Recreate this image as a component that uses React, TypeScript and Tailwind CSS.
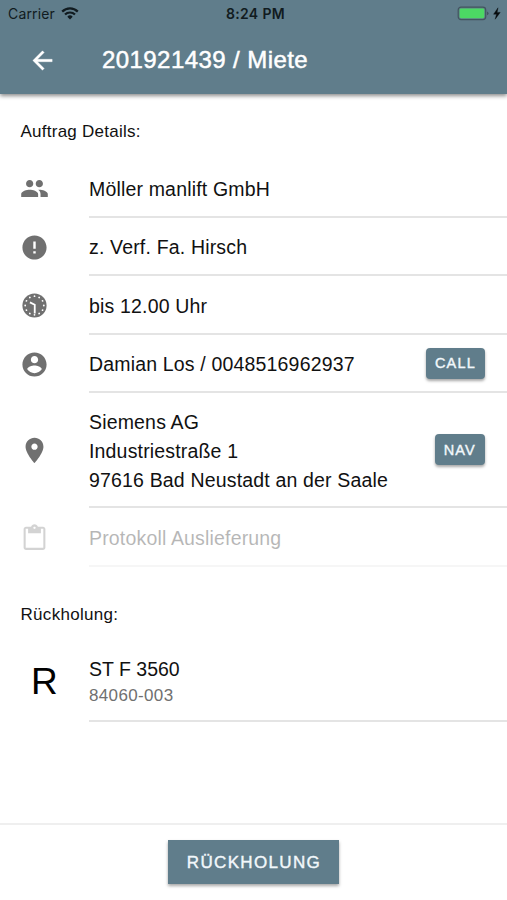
import React from 'react';

const ICON_PATHS = {
  people:
    'M16 11c1.66 0 2.99-1.34 2.99-3S17.66 5 16 5s-3 1.34-3 3 1.34 3 3 3zm-8 0c1.66 0 2.99-1.34 2.99-3S9.66 5 8 5 5 6.34 5 8s1.34 3 3 3zm0 2c-2.33 0-7 1.17-7 3.5V19h14v-2.5c0-2.33-4.67-3.5-7-3.5zm8 0c-.29 0-.62.02-.97.05 1.16.84 1.97 1.97 1.97 3.45V19h6v-2.5c0-2.33-4.67-3.5-7-3.5z',
  alert:
    'M12 2C6.48 2 2 6.48 2 12s4.48 10 10 10 10-4.48 10-10S17.52 2 12 2zm1 15h-2v-2h2v2zm0-4h-2V7h2v6z',
  contact:
    'M12 2C6.48 2 2 6.48 2 12s4.48 10 10 10 10-4.48 10-10S17.52 2 12 2zm0 3c1.66 0 3 1.34 3 3s-1.34 3-3 3-3-1.34-3-3 1.34-3 3-3zm0 14.2c-2.5 0-4.71-1.28-6-3.22.03-1.99 4-3.08 6-3.08 1.99 0 5.97 1.09 6 3.08-1.29 1.94-3.5 3.22-6 3.22z',
  pin: 'M12 1.4C8.13 1.4 4.6 4.5 4.6 8.8c0 5.4 7.4 13.6 7.4 13.6s7.4-8.2 7.4-13.6c0-4.3-3.5-7.4-7.4-7.4zm0 10c-1.44 0-2.6-1.16-2.6-2.6s1.16-2.6 2.6-2.6 2.6 1.16 2.6 2.6-1.16 2.6-2.6 2.6z',
  clipboard:
    'M19 3h-4.18C14.4 1.84 13.3 1 12 1s-2.4.84-2.82 2H5c-1.1 0-2 .9-2 2v15.3c0 1.1.9 2 2 2h14c1.1 0 2-.9 2-2V5c0-1.1-.9-2-2-2zm-7 0c.55 0 1 .45 1 1s-.45 1-1 1-1-.45-1-1 .45-1 1-1zm7.3 17.5H4.7V4.8h2V8.4h10.6V4.8h2v15.7z',
};

const Icon: React.FC<{ name: keyof typeof ICON_PATHS }> = ({ name }) => (
  <svg viewBox="0 0 24 24" className="size-[29px]" fill="currentColor" aria-hidden="true">
    <path d={ICON_PATHS[name]} />
  </svg>
);

const ClockIcon: React.FC = () => (
  <svg viewBox="0 0 24 24" className="size-[29px]" aria-hidden="true">
    <circle cx="12" cy="12" r="10" fill="currentColor" />
    {Array.from({ length: 12 }, (_, i) => (
      <circle key={i} cx="12" cy="4.3" r="0.75" fill="white" transform={`rotate(${i * 30} 12 12)`} />
    ))}
    <path d="M8.2 9.4 12.2 11.4V18.6" fill="none" stroke="white" strokeWidth="1.5" />
  </svg>
);

interface RowProps {
  icon: React.ReactNode;
  children: React.ReactNode;
  action?: string;
  height?: string;
  disabled?: boolean;
}

const Row: React.FC<RowProps> = ({ icon, children, action, height = 'h-[58.5px]', disabled }) => (
  <li className={`flex pl-5 ${height} ${disabled ? 'opacity-30' : ''}`}>
    <div className="flex w-[69px] shrink-0 items-center text-[#707070]">{icon}</div>
    <div className="flex flex-1 items-center justify-between border-b-2 border-[#e4e4e4] pr-[22px]">
      <div className="pt-[3px] text-[19.5px] leading-[29.2px] tracking-[0.17px] whitespace-nowrap">{children}</div>
      {action && (
        <button
          type="button"
          className="h-[31px] rounded-[4px] bg-[#607d8b] pt-px pr-[9px] pl-[9px] text-[14.5px] leading-none font-normal tracking-[1.2px] text-[#f2f8fb] shadow-[0_2px_3px_rgba(0,0,0,0.35)] [-webkit-text-stroke:0.4px_#f2f8fb]"
        >
          {action}
        </button>
      )}
    </div>
  </li>
);

const StatusBar: React.FC = () => (
  <div className="grid h-[27px] grid-cols-3 items-center pr-[6px] pl-[8px] text-[#111b20]">
    <div className="flex items-center gap-[6px]">
      <span className="font-['Inter'] text-[14px] tracking-[0.15px]">Carrier</span>
      <svg viewBox="0 0 18 13" className="h-[13px] w-[18px]" fill="none" stroke="currentColor" strokeWidth="2.2" aria-hidden="true">
        <path d="M1.2 4.6a11 11 0 0 1 15.6 0M4 7.6a7 7 0 0 1 10 0" />
        <path d="M9 12.4 6.3 9.7a3.8 3.8 0 0 1 5.4 0z" fill="currentColor" stroke="none" />
      </svg>
    </div>
    <span className="pl-[2px] text-center font-['Inter'] text-[14px] font-semibold tracking-[0.35px]">8:24 PM</span>
    <div className="flex items-center justify-end">
      <svg viewBox="0 0 44 16" className="h-[16px] w-[44px]" aria-hidden="true">
        <rect x="1.2" y="1.2" width="27.5" height="12.4" rx="2.8" fill="none" stroke="#43555f" strokeWidth="1.2" />
        <rect x="2.6" y="2.6" width="24.7" height="9.6" rx="1.4" fill="#4cd964" />
        <path d="M30 5.6q1.6.5 1.6 1.8t-1.6 1.8z" fill="#43555f" />
        <path d="M41 1.8 36.6 8.2h2.9L38.2 13.2l5-6.8h-3.1z" fill="#080c0e" stroke="#080c0e" strokeWidth="0.4" />
      </svg>
    </div>
  </div>
);

const App: React.FC = () => {
  return (
    <div className="flex h-[900px] w-[507px] flex-col overflow-hidden bg-white font-['Liberation_Sans',sans-serif] text-[#111]">
      <header className="h-[94px] shrink-0 bg-[#607d8b] shadow-[0_2px_4px_rgba(0,0,0,0.45)]">
        <StatusBar />
        <div className="flex h-[66px] items-center pl-[28px] text-white">
          <svg viewBox="0 0 24 24" className="size-[29px]" fill="currentColor" stroke="currentColor" strokeWidth="0.3" aria-label="Zurück">
            <path d="M20 11H7.83l5.59-5.59L12 4l-8 8 8 8 1.41-1.41L7.83 13H20v-2z" />
          </svg>
          <h1 className="ml-[45px] pb-px text-[24px] tracking-[0.43px] whitespace-nowrap [-webkit-text-stroke:0.5px_white]">
            201921439 / Miete
          </h1>
        </div>
      </header>

      <main className="flex-1">
        <h2 className="h-[65.4px] pt-[25px] pl-[20.5px] text-[17px] leading-[25px] tracking-[0.25px]">Auftrag Details:</h2>
        <ul>
          <Row icon={<Icon name="people" />}>Möller manlift GmbH</Row>
          <Row icon={<Icon name="alert" />}>z. Verf. Fa. Hirsch</Row>
          <Row icon={<ClockIcon />}>bis 12.00 Uhr</Row>
          <Row icon={<Icon name="contact" />} action="CALL">
            Damian Los / 0048516962937
          </Row>
          <Row icon={<Icon name="pin" />} action="NAV" height="h-[115px]">
            Siemens AG
            <br />
            Industriestraße 1
            <br />
            97616 Bad Neustadt an der Saale
          </Row>
          <Row icon={<Icon name="clipboard" />} disabled>
            Protokoll Auslieferung
          </Row>
        </ul>

        <h2 className="h-[74px] pt-[35px] pl-[20.5px] text-[17px] leading-[25px] tracking-[0.3px]">Rückholung:</h2>
        <ul>
          <Row icon={<span className="pl-[11px] text-[37px] text-black">R</span>} height="h-[81.6px]">
            <p className="leading-[27px] tracking-normal">ST F 3560</p>
            <p className="text-[17px] leading-[26px] tracking-[0.35px] text-[#707070]">84060-003</p>
          </Row>
        </ul>
      </main>

      <footer className="flex h-[77px] justify-center border-t-2 border-[#efefef] pt-[15px]">
        <button
          type="button"
          className="h-[44px] w-[171px] bg-[#607d8b] pt-px pl-px text-[17px] tracking-[1.35px] text-[#f2f8fb] shadow-[0_2px_3px_rgba(0,0,0,0.35)] [-webkit-text-stroke:0.4px_#f2f8fb]"
        >
          RÜCKHOLUNG
        </button>
      </footer>
    </div>
  );
};

export default App;
